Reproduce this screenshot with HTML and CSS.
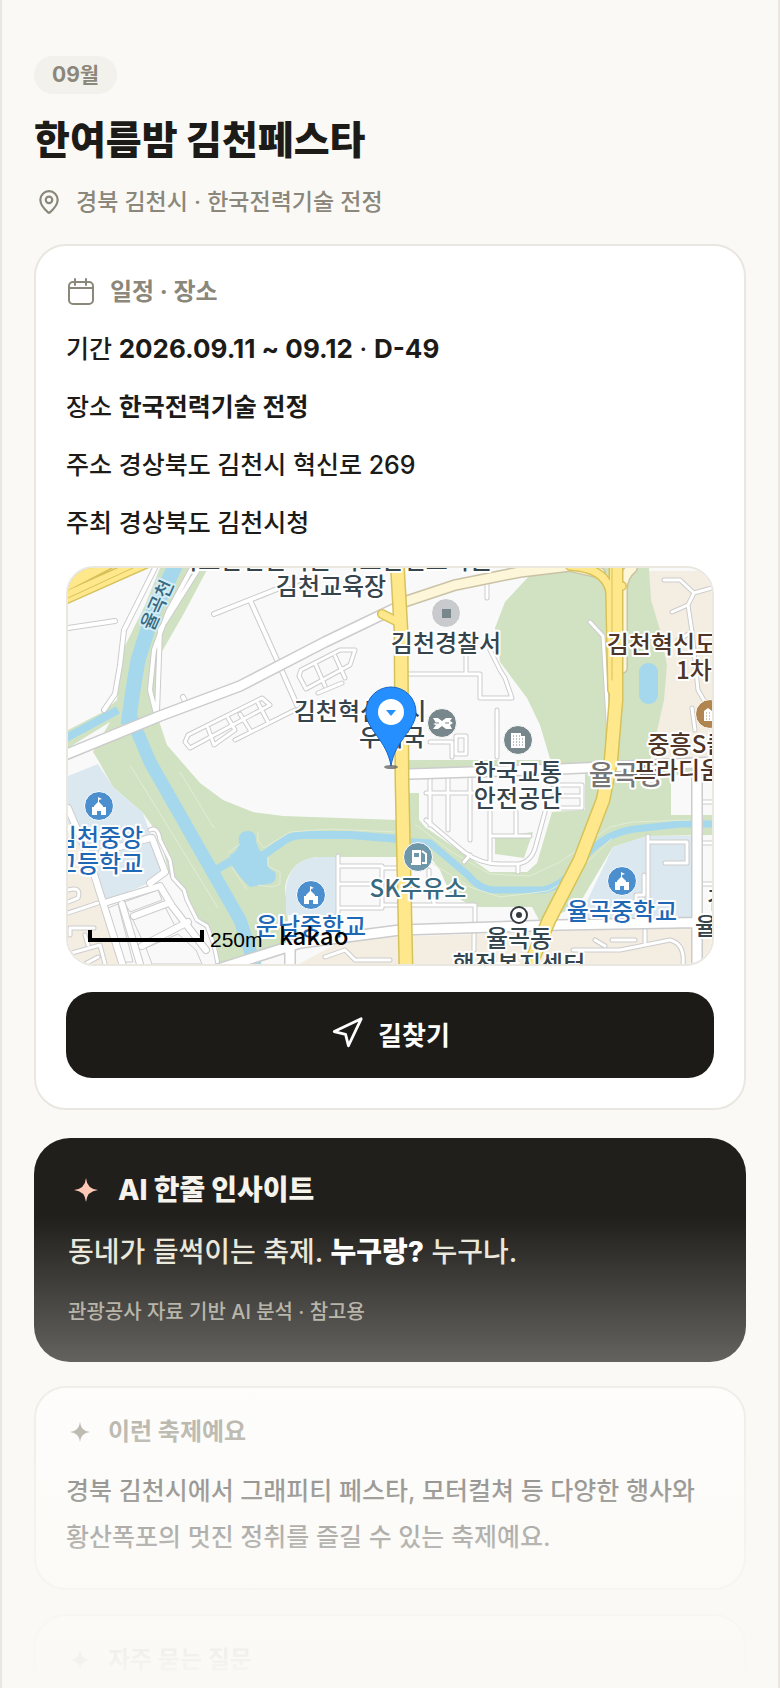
FILE: index.html
```
<!DOCTYPE html>
<html lang="ko">
<head>
<meta charset="utf-8"/>
<meta name="viewport" content="width=device-width, initial-scale=1"/>
<title>한여름밤 김천페스타</title>
<link rel="stylesheet" href="styles.css">
</head>
<body>
<main class="page">
  <header class="hero">
    <span class="badge">09월</span>
    <h1>한여름밤 김천페스타</h1>
    <p class="place">
      <svg class="icon-pin" viewBox="0 0 24 24"><path d="M20 10c0 5-5.500 10.200-7.400 11.800a1 1 0 0 1-1.200 0C9.500 20.200 4 15 4 10a8 8 0 0 1 16 0z"/><circle cx="12" cy="10" r="3"/></svg>
      <span>경북 김천시 · 한국전력기술 전정</span>
    </p>
  </header>

  <section class="card schedule">
    <h2 class="card-head">
      <svg class="icon-cal" viewBox="0 0 30 30"><rect x="3" y="5" width="24" height="22" rx="4"/><path d="M3 11h24M9 2v6M20 2v6"/></svg>
      <span>일정 · 장소</span>
    </h2>
    <ul class="info">
      <li>기간 <b class="date">2026.09.11 ~ 09.12</b> · <b class="date">D-49</b></li>
      <li>장소 <b>한국전력기술 전정</b></li>
      <li>주소 경상북도 김천시 혁신로 269</li>
      <li>주최 경상북도 김천시청</li>
    </ul>

    <div class="map">
      <svg viewBox="68 568 644 396" preserveAspectRatio="xMidYMid slice">
        <rect x="0" y="500" width="800" height="500" fill="#f9f9f9"/>

        <!-- land -->
        <g fill="#f4ede2">
          <path d="M640 571H720V758H640z"/>
          <path d="M360 938L712 926V966H295L340 942z"/>
          <path d="M68 815L122 966H68z"/>
        </g>
        <g fill="#d0e2c2">
          <path d="M160 568L145 605L122 652L117 700L103 712L68 730V748L110 722L93 752L98 760L113 787L143 813L160 837L170 877L183 893L193 913L210 927L217 964L290 945L285 887Q290 860 317 857H430L440 870L450 893L473 907H532L540 922L578 906L613 847L647 836L712 835V760H398V820L283 816L253 812L223 800L200 783L167 745L157 715L160 655L183 615L208 568z"/>
          <path d="M649 568L651 600L660 630L667 665L664 700L650 762H551L540 725L527 698L500 662L495 628L505 602L530 575L560 568z"/>
        </g>
        <path fill="#f9f9f9" d="M671 775H720V815H671zM397 770H585V810L552 812L537 863L527 872H490L425 827L397 793z"/>
        <path fill="#d0e2c2" d="M397 793H419V826L397 820zM495 837L533 832L524 858L495 854z"/>
        <g fill="#dce8f0">
          <path d="M68 776L98 764L113 787L143 813L152 838L166 876L104 902L68 822z"/>
          <path d="M286 915V887Q290 860 317 857H337V915z"/>
          <path d="M585 905L613 847L647 836H693V918L575 920z"/>
        </g>

        <!-- water -->
        <g fill="none" stroke="#a5d8ec">
          <path stroke-width="15" d="M178 560L154 610L138 660L133 690L128 725"/>
          <path stroke-width="13" d="M128 710L150 762L200 850L240 920L256 968"/>
          <path stroke-width="8" d="M66 738L118 710"/>
          <path stroke-width="8" d="M212 872L240 856M262 856L285 840Q292 835 305 835H350L400 839"/>
          <path stroke-width="7" d="M400 841L430 843L468 875Q480 890 495 890H540Q555 890 572 872L590 851Q610 832 635 829L680 824H712"/>
        </g>
        <path fill="#a5d8ec" d="M239 842Q237 831 249 831Q257 832 256 842L260 851L268 853Q264 868 275 872Q278 883 268 884L250 887Q240 878 231 864L230 855Q238 852 239 842z"/>
        <rect x="639" y="663" width="19" height="41" rx="9" fill="#a5d8ec"/>
        <g class="trail">
          <path d="M180 772L214 828M130 765L218 908M228 853L240 844M232 867L247 890M258 832V841L264 848L290 832L330 829L395 832M268 857V866L280 872V884L272 887L258 885M415 824L450 851L490 874L530 876L560 862L610 827L632 822L690 820M416 853L470 887L500 897L548 891L570 879L612 838"/>
        </g>

        <!-- side streets -->
        <g class="road-edge narrow">
          <path d="M155 568L124 630L120 665L115 694L104 710M192 568L168 612L154 650L150 690L156 714M199 568L160 630L157 712M68 628L115 621M214 614L300 580M250 600L277 660L297 705M183 697L186 703"/>
        </g>
        <g class="road narrow">
          <path d="M155 568L124 630L120 665L115 694L104 710M192 568L168 612L154 650L150 690L156 714M199 568L160 630L157 712M68 628L115 621M214 614L300 580M250 600L277 660L297 705M183 697L186 703"/>
        </g>
        <g class="road-edge thin">
          <path d="M185 742L190 748L270 705L262 698L188 735zM208 728L214 745L235 730L228 718M235 740L295 710M240 714L250 730M258 703L268 722M299 676L306 689L350 665L355 650L340 650L301 670zM315 663L325 686M335 656L345 678M318 693L342 683M487 568V598M466 655V673M408 674H480L480 698H512L505 678L500 670L490 650M497 710V757M430 742H452V757M456 736H466V754H456zM590 622L603 636L608 720V757"/>
          <path d="M664 580H680L694 593L712 588M694 593L688 605L672 612M688 605L692 632L698 690L705 702M692 632L678 640M692 708L695 730"/>
          <path d="M150 830Q158 826 160 840L170 860L173 878L184 890L187 900L197 920L207 926L214 945L218 964"/>
          <path d="M430 770V825M448 772V830M470 772V840M490 812V862M516 812V835M426 793H490M490 836H530M426 820L464 852Q480 864 500 864H518Q532 862 536 845L545 812M470 855L464 862M518 864V872M553 785H582V808H556M553 796H580"/>
          <path d="M338 856V920M340 866H382V908M340 884H378M340 908H382M398 868H382M383 905H475V922M429 870V890L435 905M648 836V910M650 842H687V863H665M644 875V895H636V905M474 930V950M645 930V945M573 950H620L670 940Q685 944 683 964M595 940L605 946M612 940H635M325 957L345 950L355 960H390M712 802H700M712 843H700M712 884H700"/>
          <path d="M68 890Q82 886 78 898L68 902M68 913L98 903M70 935V928H94M85 935L88 945M68 954L100 945L105 964M85 964L98 957"/>
        </g>
        <g class="road thin">
          <path d="M185 742L190 748L270 705L262 698L188 735zM208 728L214 745L235 730L228 718M235 740L295 710M240 714L250 730M258 703L268 722M299 676L306 689L350 665L355 650L340 650L301 670zM315 663L325 686M335 656L345 678M318 693L342 683M487 568V598M466 655V673M408 674H480L480 698H512L505 678L500 670L490 650M497 710V757M430 742H452V757M456 736H466V754H456zM590 622L603 636L608 720V757"/>
          <path d="M664 580H680L694 593L712 588M694 593L688 605L672 612M688 605L692 632L698 690L705 702M692 632L678 640M692 708L695 730"/>
          <path d="M150 830Q158 826 160 840L170 860L173 878L184 890L187 900L197 920L207 926L214 945L218 964"/>
          <path d="M430 770V825M448 772V830M470 772V840M490 812V862M516 812V835M426 793H490M490 836H530M426 820L464 852Q480 864 500 864H518Q532 862 536 845L545 812M470 855L464 862M518 864V872M553 785H582V808H556M553 796H580"/>
          <path d="M338 856V920M340 866H382V908M340 884H378M340 908H382M398 868H382M383 905H475V922M429 870V890L435 905M648 836V910M650 842H687V863H665M644 875V895H636V905M474 930V950M645 930V945M573 950H620L670 940Q685 944 683 964M595 940L605 946M612 940H635M325 957L345 950L355 960H390M712 802H700M712 843H700M712 884H700"/>
          <path d="M68 890Q82 886 78 898L68 902M68 913L98 903M70 935V928H94M85 935L88 945M68 954L100 945L105 964M85 964L98 957"/>
        </g>
        <path fill="#f9f9f9" stroke="#ccc" d="M108 908L118 904L133 962H124zM124 902L158 890L162 900L130 912zM132 918L164 905L176 928L144 944zM146 948L178 934L196 950L202 964H152z"/>
        <g class="road-edge mid"><path d="M68 808L88 855L123 966M104 903L160 886L172 906L206 950M122 904L140 964M134 916L166 904M142 946L188 922M150 838L102 852M152 838L165 872L150 883"/></g>
        <g class="road mid"><path d="M68 808L88 855L123 966M104 903L160 886L172 906L206 950M122 904L140 964M134 916L166 904M142 946L188 922M150 838L102 852M152 838L165 872L150 883"/></g>

        <!-- main roads -->
        <g class="road-edge wide"><path d="M60 757L160 716L240 686L325 642L400 606M410 774L560 769L720 762M697 772V968M215 970L300 943L400 930L560 925L720 922M290 944V968"/></g>
        <g class="road wide"><path d="M60 757L160 716L240 686L325 642L400 606M410 774L560 769L720 762M697 772V968M215 970L300 943L400 930L560 925L720 922M290 944V968"/></g>
        <g fill="none" stroke-linecap="round">
          <path stroke="#c9c2a6" stroke-width="12" d="M404 602L455 585L520 572L570 566L600 573M632 568Q622 576 622 590V668"/>
          <path stroke="#fdf6d8" stroke-width="9" d="M404 602L455 585L520 572L570 566L600 573M632 568Q622 576 622 590V668"/>
          <g stroke="#d6c25a">
            <path stroke-width="14" d="M60 600L150 560M60 588L110 562"/>
            <path stroke-width="10" d="M382 614L402 624M570 566Q606 568 610 592L612 690M620 586h2"/>
            <path stroke-width="15" d="M397 560L401 630L402 780L406 970M616 560L616 700L611 760L603 800L580 860L549 920L528 970"/>
          </g>
          <g stroke="#ffe88c">
            <path stroke-width="11" d="M60 600L150 560M60 588L110 562"/>
            <path stroke-width="7" d="M382 614L402 624M570 566Q606 568 610 592L612 690M620 586h2"/>
            <path stroke-width="12" d="M397 560L401 630L402 780L406 970M616 560L616 700L611 760L603 800L580 860L549 920L528 970"/>
          </g>
          <path stroke="#d6c25a" stroke-width="1" d="M68 598L135 567M612 568V680"/>
        </g>

        <!-- round markers -->
        <g stroke="#fff" stroke-width="1">
          <circle cx="446" cy="613" r="14.500" fill="#c9cace"/>
          <circle cx="442" cy="723" r="14.500" fill="#78878b"/>
          <circle cx="518" cy="740" r="14.500" fill="#78878b"/>
          <circle cx="710" cy="714" r="14.500" fill="#b0854f"/>
          <circle cx="418" cy="857" r="14.500" fill="#6e98aa"/>
          <circle cx="99" cy="806" r="14.500" fill="#4b8fce"/>
          <circle cx="311" cy="895" r="14.500" fill="#4b8fce"/>
          <circle cx="622" cy="881" r="14.500" fill="#4b8fce"/>
        </g>
        <path fill="#78878b" d="M442 609h9v9h-9z"/>
        <path fill="#fff" d="M433 718h5l4 3 4-3h6l-2 3 3 2-3 2 2 4h-6l-4-3-4 3h-5l3-4-3-1 3-1z"/>
        <path stroke="#78878b" d="M436 723h3M445 723h4"/>
        <path fill="#fff" d="M511 733h10v3h4v12h-14zM704 711l4-3 4 3v-2h4v12h-12z"/>
        <path stroke="#78878b" stroke-dasharray="1 2" d="M513 736h7M513 739h11M513 742h11M513 745h11"/>
        <path stroke="#b0854f" stroke-dasharray="1 2" d="M706 713h8M706 716h8M706 719h8"/>
        <path fill="#fff" d="M412 850h9v15h-10v-2h1z"/>
        <path fill="#6e98aa" d="M414 853h5v4h-5z"/>
        <path fill="none" stroke="#fff" stroke-width="2" d="M422 851l4 3v9h-4"/>
        <g fill="#fff">
          <path id="school" d="M92 815v-8h2v-1l4-4v-5l4 2-3 1v2l4 4v1h3v8h-5v-4h-4v4z"/>
          <use href="#school" x="212" y="89"/>
          <use href="#school" x="523" y="75"/>
        </g>
        <circle cx="519" cy="915" r="8" fill="#fff" stroke="#333a40" stroke-width="2"/>
        <circle cx="519" cy="915" r="3" fill="#333a40"/>

        <!-- place names -->
        <g class="label">
          <text x="334" y="569">국토안전관리원 국토안전교육원</text>
          <text x="331" y="595">김천교육장</text>
          <text x="446" y="652">김천경찰서</text>
          <text x="360" y="720">김천혁신도시</text>
          <text x="392" y="746">우체국</text>
          <text x="518" y="781">한국교통</text>
          <text x="518" y="807">안전공단</text>
          <text x="519" y="947">율곡동</text>
          <text x="519" y="973">행정복지센터</text>
          <text x="729" y="909">김천</text>
          <text x="717" y="935">율곡</text>
        </g>
        <text class="label town" x="626" y="785">율곡동</text>
        <g class="label apt">
          <text x="673" y="653">김천혁신도시</text>
          <text x="694" y="679">1차</text>
          <text x="710" y="753">중흥S클래스</text>
          <text x="678" y="779">프라디움</text>
        </g>
        <g class="label school">
          <text x="99" y="846">김천중앙</text>
          <text x="99" y="872">고등학교</text>
          <text x="311" y="935">운남중학교</text>
          <text x="622" y="920">율곡중학교</text>
        </g>
        <text class="label gas" x="418" y="897">SK주유소</text>
        <text class="label river" x="0" y="7" transform="translate(157 605) rotate(-66)">율곡천</text>

        <!-- current pin -->
        <ellipse cx="391" cy="767" rx="7" ry="2" fill="#555" opacity=".7"/>
        <path fill="#258fff" stroke="#1a66c4" d="M391 766C387 740 366 730 366 712a25 25 0 0 1 50 0C416 730 395 740 391 766z"/>
        <circle cx="391" cy="712" r="13" fill="#fff"/>
        <path fill="#258fff" d="M386 710h10l-5 6z"/>

        <!-- scale -->
        <path fill="none" stroke="#000" stroke-width="4" d="M90 930v10h112v-10"/>
        <text class="scale" x="210" y="947">250m</text>
        <text class="brand" x="279" y="945">kakao</text>
      </svg>
    </div>

    <button class="route" type="button">
      <svg class="icon-nav" viewBox="0 0 24 24"><path d="M3 11L22 2L13 21L11 13z"/></svg>
      <span>길찾기</span>
    </button>
  </section>

  <section class="insight">
    <h2>
      <svg class="star" viewBox="0 0 24 24"><path d="M12 0Q13 11 24 12Q13 13 12 24Q11 13 0 12Q11 11 12 0z"/></svg>
      <span>AI 한줄 인사이트</span>
    </h2>
    <p class="line">동네가 들썩이는 축제. <b>누구랑?</b> 누구나.</p>
    <p class="source">관광공사 자료 기반 AI 분석 · 참고용</p>
  </section>

  <section class="card">
    <h2 class="card-head">
      <svg class="star small" viewBox="0 0 24 24"><path d="M12 0Q13 11 24 12Q13 13 12 24Q11 13 0 12Q11 11 12 0z"/></svg>
      <span>이런 축제예요</span>
    </h2>
    <p class="desc">경북 김천시에서 그래피티 페스타, 모터컬쳐 등 다양한 행사와 황산폭포의 멋진 정취를 즐길 수 있는 축제예요.</p>
  </section>

  <section class="card">
    <h2 class="card-head">
      <svg class="star small" viewBox="0 0 24 24"><path d="M12 0Q13 11 24 12Q13 13 12 24Q11 13 0 12Q11 11 12 0z"/></svg>
      <span>자주 묻는 질문</span>
    </h2>
    <p class="desc"></p>
  </section>

  <div class="fade"></div>
</main>
</body>
</html>
```
FILE: styles.css
```
* {
  box-sizing: border-box;
}
body {
  margin: 0;
  background: #faf9f5;
  color: #1c1b17;
  font-family: Inter, "Noto Sans CJK KR", sans-serif;
  font-size: 25px;
  font-weight: 500;
}
h1, h2, p, ul {
  margin: 0;
  padding: 0;
}
svg {
  flex: none;
}
.page {
  position: relative;
  height: 100vh;
  overflow: hidden;
  padding: 56px 32px 0;
  border-left: 2px solid #e9e7e0;
  border-right: 2px solid #e9e7e0;
}

/* header */
.hero {
  display: flex;
  flex-direction: column;
  align-items: flex-start;
  margin-bottom: 24px;
}
.badge {
  padding: 0 18px;
  border-radius: 19px;
  background: #f2f1ec;
  color: #8b877a;
  font-size: 21px;
  font-weight: 700;
  line-height: 38px;
}
h1 {
  margin-top: 18px;
  font-size: 39px;
  font-weight: 800;
  line-height: 56px;
}
.place {
  display: flex;
  align-items: center;
  gap: 14px;
  margin-top: 16px;
  padding-left: 2px;
  color: #8b877a;
  font-size: 23px;
  line-height: 36px;
}
.icon-pin, .icon-cal, .icon-nav {
  fill: none;
  stroke: currentColor;
  stroke-width: 2;
  stroke-linecap: round;
  stroke-linejoin: round;
}
.icon-pin {
  width: 26px;
  height: 26px;
}

/* cards */
.card {
  margin-bottom: 24px;
  padding: 28px 30px;
  border: 2px solid #e9e7e0;
  border-radius: 32px;
  background: #fff;
}
.schedule {
  padding: 30px;
}
.card-head {
  display: flex;
  align-items: center;
  gap: 14px;
  margin-bottom: 20px;
  color: #8b877a;
  font-size: 24px;
  font-weight: 700;
  line-height: 32px;
}
.icon-cal {
  width: 30px;
  height: 30px;
}
.info {
  display: grid;
  gap: 16px;
  list-style: none;
  line-height: 42px;
}
.info b {
  font-weight: 700;
}
.info .date {
  font-size: 26px;
}
.desc {
  line-height: 46px;
}

/* map */
.map {
  height: 400px;
  margin: 22px 0 26px;
  border: 2px solid #e9e7e0;
  border-radius: 28px;
  overflow: hidden;
}
.map svg {
  display: block;
  width: 100%;
  height: 100%;
}
.road, .road-edge {
  fill: none;
  stroke: #fff;
  stroke-linecap: round;
  stroke-linejoin: round;
}
.road-edge {
  stroke: #ccc;
}
.road.thin { stroke-width: 3; }
.road-edge.thin { stroke-width: 5; }
.road.narrow { stroke-width: 4; }
.road-edge.narrow { stroke-width: 6; }
.road.mid { stroke-width: 6; }
.road-edge.mid { stroke-width: 8; }
.road.wide { stroke-width: 9; }
.road-edge.wide { stroke-width: 12; }
.trail {
  fill: none;
  stroke: #e3ecd6;
  stroke-width: 1;
}
.label {
  fill: #36444c;
  stroke: #fff;
  stroke-width: 4;
  stroke-linejoin: round;
  paint-order: stroke;
  font-family: "Noto Sans CJK KR", sans-serif;
  font-size: 24px;
  font-weight: 500;
  text-anchor: middle;
}
.label.apt { fill: #4e3527; }
.label.school { fill: #1f68b5; }
.label.gas { fill: #376a80; }
.label.town {
  fill: #777;
  font-size: 27px;
}
.label.river {
  fill: #376a80;
  stroke: #d3ecf5;
  font-size: 19px;
}
.scale {
  font-family: "Liberation Sans", Arial, sans-serif;
  font-size: 21px;
  font-weight: 400;
}
.brand {
  font-family: "Noto Sans CJK KR", sans-serif;
  font-size: 24px;
}

.route {
  display: flex;
  align-items: center;
  justify-content: center;
  gap: 14px;
  width: 100%;
  height: 86px;
  padding: 0 0 4px;
  border: none;
  border-radius: 26px;
  background: #1c1b17;
  color: #fff;
  font-family: inherit;
  font-size: 26px;
  font-weight: 700;
  cursor: pointer;
}
.icon-nav {
  width: 34px;
  height: 34px;
}

/* insight */
.insight {
  margin: 28px 0 24px;
  padding: 34px;
  border-radius: 36px;
  background: #201f1b;
  color: #e9e6da;
}
.insight h2 {
  display: flex;
  align-items: center;
  gap: 14px;
  color: #f5f3ec;
  font-size: 28px;
  font-weight: 800;
  line-height: 34px;
}
.star {
  width: 36px;
  height: 36px;
  padding: 6px;
  fill: #ffc9b5;
}
.star.small {
  width: 28px;
  height: 28px;
  padding: 4px;
  fill: #8b877a;
}
.insight .line {
  margin-top: 20px;
  font-size: 28px;
  line-height: 48px;
}
.insight .line b {
  color: #fff;
  font-weight: 800;
}
.insight .source {
  margin-top: 20px;
  color: #a8a498;
  font-size: 20px;
  line-height: 32px;
}

.fade {
  position: absolute;
  left: 0;
  right: 0;
  bottom: 0;
  height: 472px;
  background: linear-gradient(rgba(250, 249, 245, 0), #faf9f5);
  pointer-events: none;
}
```
